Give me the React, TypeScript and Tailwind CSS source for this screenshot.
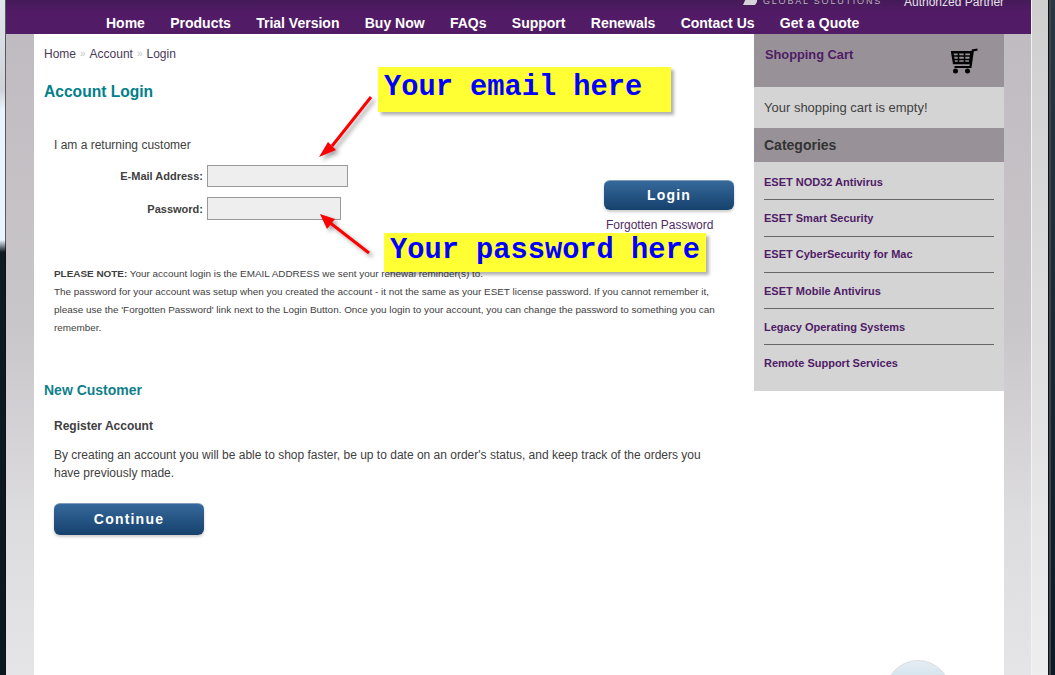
const nav = ["Home", "Products", "Trial Version", "Buy Now", "FAQs", "Support", "Renewals", "Contact Us", "Get a Quote"];
const cats = ["ESET NOD32 Antivirus", "ESET Smart Security", "ESET CyberSecurity for Mac", "ESET Mobile Antivirus", "Legacy Operating Systems", "Remote Support Services"];

function Sep() {
  return <span className="mx-[4px] text-[10px] text-[#c4c4c4]">»</span>;
}

function Btn({ label, w }: { label: string; w: string }) {
  return (
    <button className={`${w} rounded-[6px] bg-gradient-to-b from-[#35699b] to-[#16416d] border-t border-[#7f9dbb] text-[14px] font-bold tracking-[1.2px] text-white shadow-[0_2px_3px_rgba(0,0,0,0.2)]`}>
      {label}
    </button>
  );
}

function Cart() {
  return (
    <svg width="27" height="26" viewBox="0 0 27 26" className="text-black">
      <path d="M26.5 1.5 L21.8 2.5 L19.5 19 L3.5 19" fill="none" stroke="currentColor" strokeWidth="2.2" />
      <path d="M1.2 4.2 H20.5 L19 15 H3 Z" fill="none" stroke="currentColor" strokeWidth="2.4" />
      <path d="M1.5 8 H20 M2 11.5 H19.5 M7.5 4 V15 M13.5 4 V15" fill="none" stroke="currentColor" strokeWidth="1.6" />
      <circle cx="4.5" cy="23" r="2.5" fill="currentColor" />
      <circle cx="16.5" cy="23" r="2.5" fill="currentColor" />
    </svg>
  );
}

export default function App() {
  return (
    <div className="relative flex h-[675px] w-[1055px] overflow-hidden bg-white font-['Liberation_Sans',Arial,sans-serif] text-[12px] text-[#404040]">
      {/* window edge, left */}
      <div className="w-[5px] shrink-0 bg-[linear-gradient(to_bottom,#dfe6ec_0px,#cfd3d8_90px,#e9f4fe_110px,#e9f4fe_240px,#0f1a22_252px,#0a1820_675px)]" />
      <div className="w-px shrink-0 bg-[linear-gradient(to_bottom,#5a5a5a,#5a5a5a_240px,#111_252px)]" />

      {/* page */}
      <div className="flex w-[1025px] shrink-0 flex-col">
        <header className="h-[34px] shrink-0 overflow-hidden bg-gradient-to-b from-[#451a58] via-[#511b66] via-[35%] to-[#511b66]">
          <div className="-mt-[5px] flex h-[14px] items-center pl-[737px]">
            <svg width="20" height="14" viewBox="0 0 20 14" className="mb-[4px]">
              <path d="M0 14 L4 5 H14 V11 L12 14 Z" fill="#d5d2d8" transform="translate(0,-2)" />
            </svg>
            <span className="w-[141px] text-[9px] tracking-[1.8px] text-[#b9b2bf]">GLOBAL SOLUTIONS</span>
            <span className="text-[12px] text-[#e6e2ea]">Authorized Partner</span>
          </div>
          <nav className="mt-[5px] flex h-[18px] items-center gap-[25.3px] pl-[100px] text-[14px] font-bold text-white">
            {nav.map((n) => (
              <span key={n}>{n}</span>
            ))}
          </nav>
        </header>

        <div className="flex flex-1">
          <div className="w-[28px] shrink-0 bg-[linear-gradient(to_bottom,#c0bbc0,#c9c6ca_45%,#dcdbde_75%,#e5e4e7)]" />

          <main className="w-[720px] shrink-0 bg-white pl-[10px]">
            <div className="mt-[12px] flex h-[16px] items-center leading-[16px] text-[#4a3a55]">
              <span>Home</span>
              <Sep />
              <span>Account</span>
              <Sep />
              <span>Login</span>
            </div>
            <h1 className="mt-[20px] text-[15.6px] font-bold leading-[20px] text-[#00808a]">Account Login</h1>

            <div className="mt-[34px] flex pl-[10px]">
              <div className="w-[550px]">
                <p className="leading-[18px]">I am a returning customer</p>
                <div className="mt-[11px] flex items-center">
                  <label className="w-[153px] pr-[4px] text-right text-[11px] font-bold">E-Mail Address:</label>
                  <div className="h-[22px] w-[141px] border border-[#999] bg-[#eeeeee]" />
                </div>
                <div className="mt-[10px] flex items-center">
                  <label className="w-[153px] pr-[4px] pt-[1px] text-right text-[11px] font-bold">Password:</label>
                  <div className="h-[23px] w-[134px] border border-[#999] bg-[#eeeeee]" />
                </div>
              </div>
              <div className="flex flex-col items-start pt-[44px]">
                <Btn label="Login" w="h-[30px] w-[130px]" />
                <p className="mt-[7px] ml-[2px] leading-[16px] text-[#4f2a63]">Forgotten Password</p>
              </div>
            </div>

            <div className="mt-[32px] w-[680px] pl-[10px] text-[9.92px] leading-[18px]">
              <p>
                <b>PLEASE NOTE:</b> Your account login is the EMAIL ADDRESS we sent your renewal reminder(s) to.
              </p>
              <p>
                The password for your account was setup when you created the account - it not the same as your ESET license password. If you cannot remember it, please use the 'Forgotten Password' link next to the Login Button. Once you login to your account, you can change the password to something you can remember.
              </p>
            </div>

            <h2 className="mt-[43px] text-[14px] font-bold leading-[20px] text-[#0f7f8c]">New Customer</h2>
            <h3 className="mt-[18px] pl-[10px] font-bold leading-[16px]">Register Account</h3>
            <p className="mt-[12px] w-[670px] pl-[10px] leading-[18px]">
              By creating an account you will be able to shop faster, be up to date on an order's status, and keep track of the orders you have previously made.
            </p>
            <div className="mt-[21px] flex pl-[10px]">
              <Btn label="Continue" w="h-[32px] w-[150px]" />
            </div>
          </main>

          <aside className="w-[250px] shrink-0 self-start bg-[#d4d4d4]">
            <div className="flex h-[53px] justify-between bg-[#989298] pl-[11px] pr-[26px] pt-[13px]">
              <span className="text-[12.8px] font-bold leading-[16px] text-[#4f1b66]">Shopping Cart</span>
              <span className="pt-[1px]">
                <Cart />
              </span>
            </div>
            <div className="flex h-[41px] items-center pl-[10px] text-[13px]">Your shopping cart is empty!</div>
            <div className="flex h-[34px] items-center bg-[#989298] pl-[10px] text-[14px] font-bold text-[#333]">Categories</div>
            <ul className="px-[10px] pb-[20px] pt-[11.8px]">
              {cats.map((c, i) => (
                <li
                  key={c}
                  className={`text-[11px] font-bold leading-[16px] text-[#4f1b66] ${i < 5 ? "mb-[9.8px] h-[26.5px] border-b border-[#666] pb-[10px]" : ""}`}
                >
                  {c}
                </li>
              ))}
            </ul>
          </aside>

          <div className="w-[27px] shrink-0 bg-[linear-gradient(to_bottom,#c0bbc0,#c9c6ca_45%,#dcdbde_75%,#e5e4e7)]" />
        </div>
      </div>

      {/* window edge, right */}
      <div className="w-px shrink-0 bg-[#f2f2f2]" />
      <div className="w-[16px] shrink-0 bg-gradient-to-b from-[#cfcfcf] to-[#eeeeee]" />
      <div className="w-px shrink-0 bg-[#111]" />
      <div className="w-[2px] shrink-0 bg-[#3d4650]" />
      <div className="flex-1 bg-gradient-to-b from-[#2b3843] to-[#0c1a24]" />

      {/* annotations laid over the page */}
      <div className="absolute left-[378px] top-[67px] flex h-[45px] w-[293px] items-center bg-[#ffff33] pb-[2px] pl-[6px] font-['Liberation_Mono',monospace] text-[28.7px] font-bold leading-none text-[#0000ff] shadow-[3px_3px_3px_rgba(0,0,0,0.3)]">
        Your email here
      </div>
      <div className="absolute left-[384px] top-[233px] flex h-[39px] w-[322px] items-center bg-[#ffff33] pb-[2px] pl-[6px] font-['Liberation_Mono',monospace] text-[28.7px] font-bold leading-none text-[#0000ff] shadow-[3px_3px_3px_rgba(0,0,0,0.3)]">
        Your password here
      </div>
      <svg width="1055" height="675" className="pointer-events-none absolute left-0 top-0 drop-shadow-[3px_3px_2px_rgba(0,0,0,0.35)]">
        <path d="M371 97 L332 146" stroke="#ff0000" strokeWidth="3" fill="none" />
        <path d="M319 157 L328 142 L336 150 Z" fill="#ff0000" />
        <path d="M369 253 L329 222" stroke="#ff0000" strokeWidth="3" fill="none" />
        <path d="M320 214 L335 219 L327 229 Z" fill="#ff0000" />
      </svg>
      <div className="absolute left-[885px] top-[660px] h-[66px] w-[66px] rounded-full border border-[#dedede] bg-gradient-to-b from-[#e4edf3] to-[#a9c8dc]" />
    </div>
  );
}
